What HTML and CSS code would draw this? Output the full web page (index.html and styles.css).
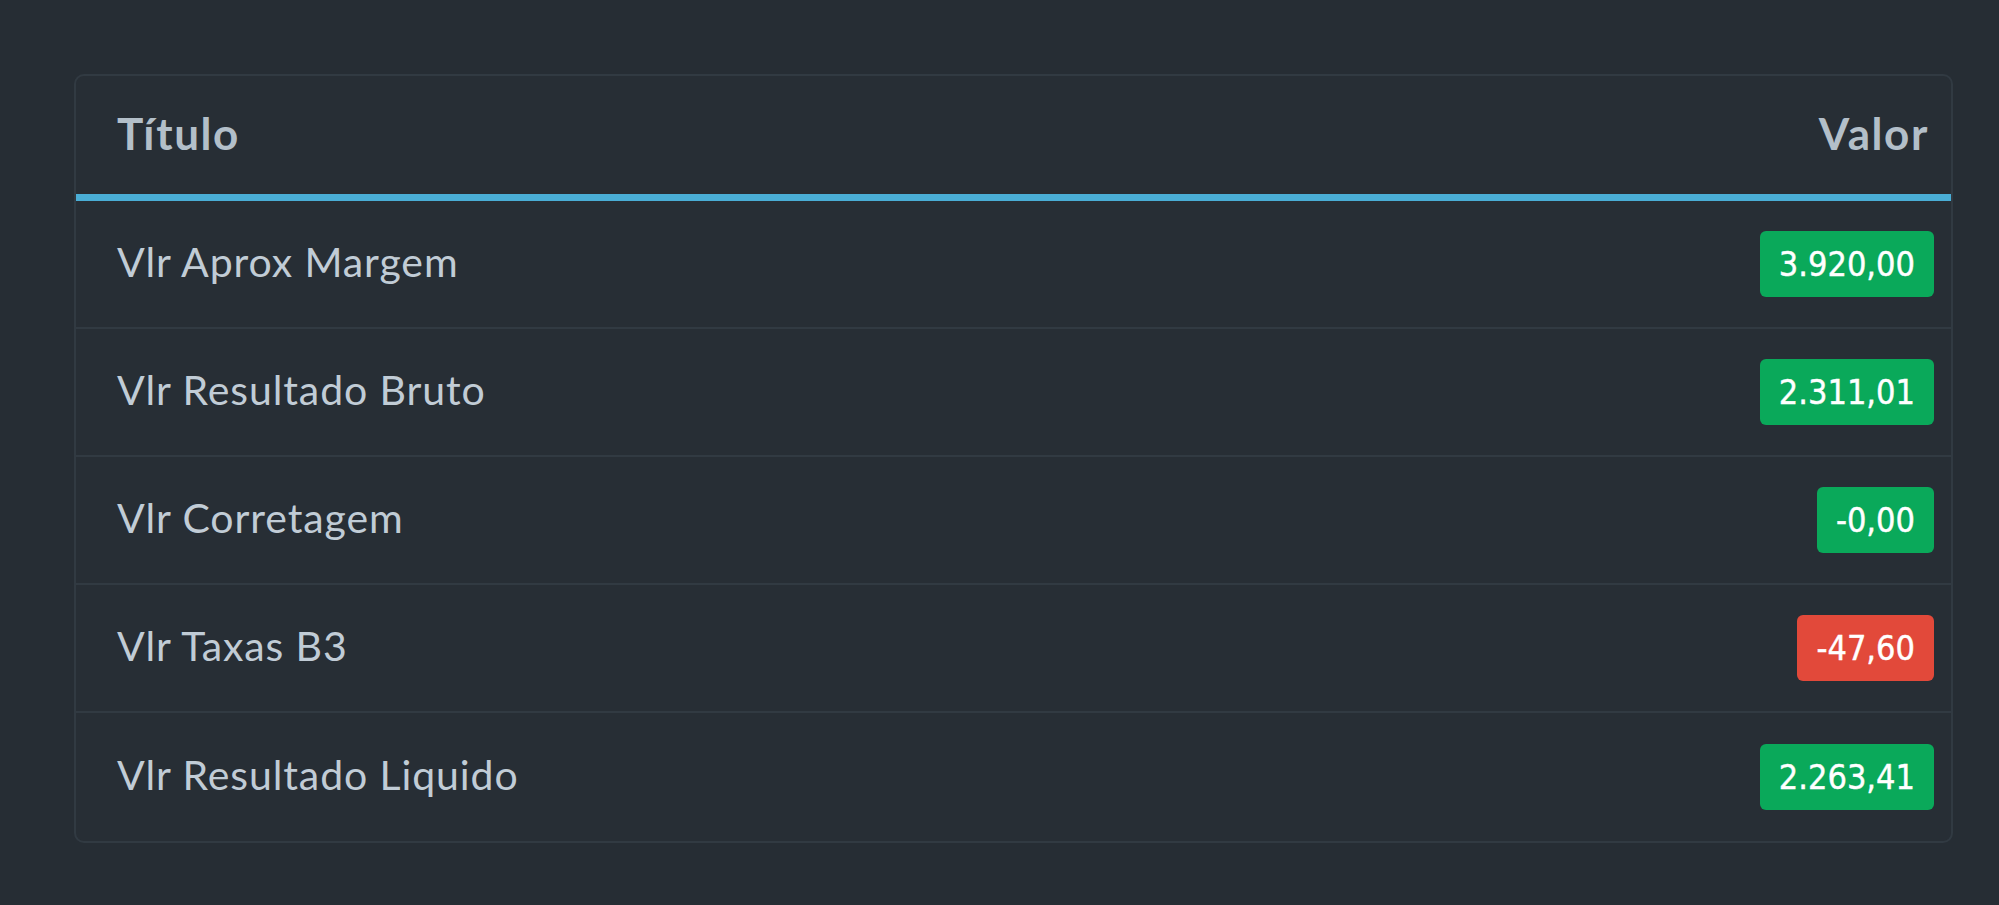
FILE: index.html
```html
<!DOCTYPE html>
<html lang="pt-BR">
<head>
<meta charset="utf-8">
<title>Resultado</title>
<link rel="stylesheet" href="styles.css">
</head>
<body>
<div class="page">
  <div class="card">
    <div class="row head">
      <div class="cell title">Título</div>
      <div class="cell value">Valor</div>
    </div>
    <div class="row">
      <div class="cell title">Vlr Aprox Margem</div>
      <div class="cell value"><span class="badge pos">3.920,00</span></div>
    </div>
    <div class="row">
      <div class="cell title">Vlr Resultado Bruto</div>
      <div class="cell value"><span class="badge pos">2.311,01</span></div>
    </div>
    <div class="row">
      <div class="cell title">Vlr Corretagem</div>
      <div class="cell value"><span class="badge pos">-0,00</span></div>
    </div>
    <div class="row">
      <div class="cell title">Vlr Taxas B3</div>
      <div class="cell value"><span class="badge neg">-47,60</span></div>
    </div>
    <div class="row last">
      <div class="cell title">Vlr Resultado Liquido</div>
      <div class="cell value"><span class="badge pos">2.263,41</span></div>
    </div>
  </div>
</div>
</body>
</html>
```
FILE: styles.css
```css
html, body {
  margin: 0;
  padding: 0;
  background: #262d34;
}
body {
  font-family: "Lato", "Open Sans", sans-serif;
  color: #c1ccd6;
}
.page {
  padding: 74px 46px 0 74px;
}
.card {
  background: #272e35;
  border: 2px solid #313a42;
  border-radius: 10px;
  overflow: hidden;
}
.row {
  display: flex;
  align-items: center;
  justify-content: space-between;
  height: 126px;
  border-bottom: 2px solid #313a42;
  padding: 0 17px 0 41px;
}
.row.last {
  border-bottom: none;
  height: 128px;
}
.row.head {
  height: 118px;
  border-bottom: 7px solid #4aaed6;
  padding-right: 22px;
}
.head .cell {
  font-weight: 700;
  font-size: 44px;
  letter-spacing: 1.6px;
  color: #b3bfc9;
  padding-bottom: 4px;
}
.title {
  font-size: 41px;
  letter-spacing: 0.9px;
  padding-bottom: 6px;
}
.badge {
  display: inline-block;
  height: 66px;
  line-height: 66px;
  padding: 0 19px;
  border-radius: 6px;
  color: #ffffff;
  font-family: "DejaVu Sans Condensed", "Liberation Sans Narrow", "Roboto", sans-serif;
  font-size: 34px;
  font-weight: 500;
  font-stretch: condensed;
  -webkit-text-stroke: 0.4px #ffffff;
}
.badge.pos {
  background: #0aa95a;
}
.badge.neg {
  background: #e2493a;
}
```
